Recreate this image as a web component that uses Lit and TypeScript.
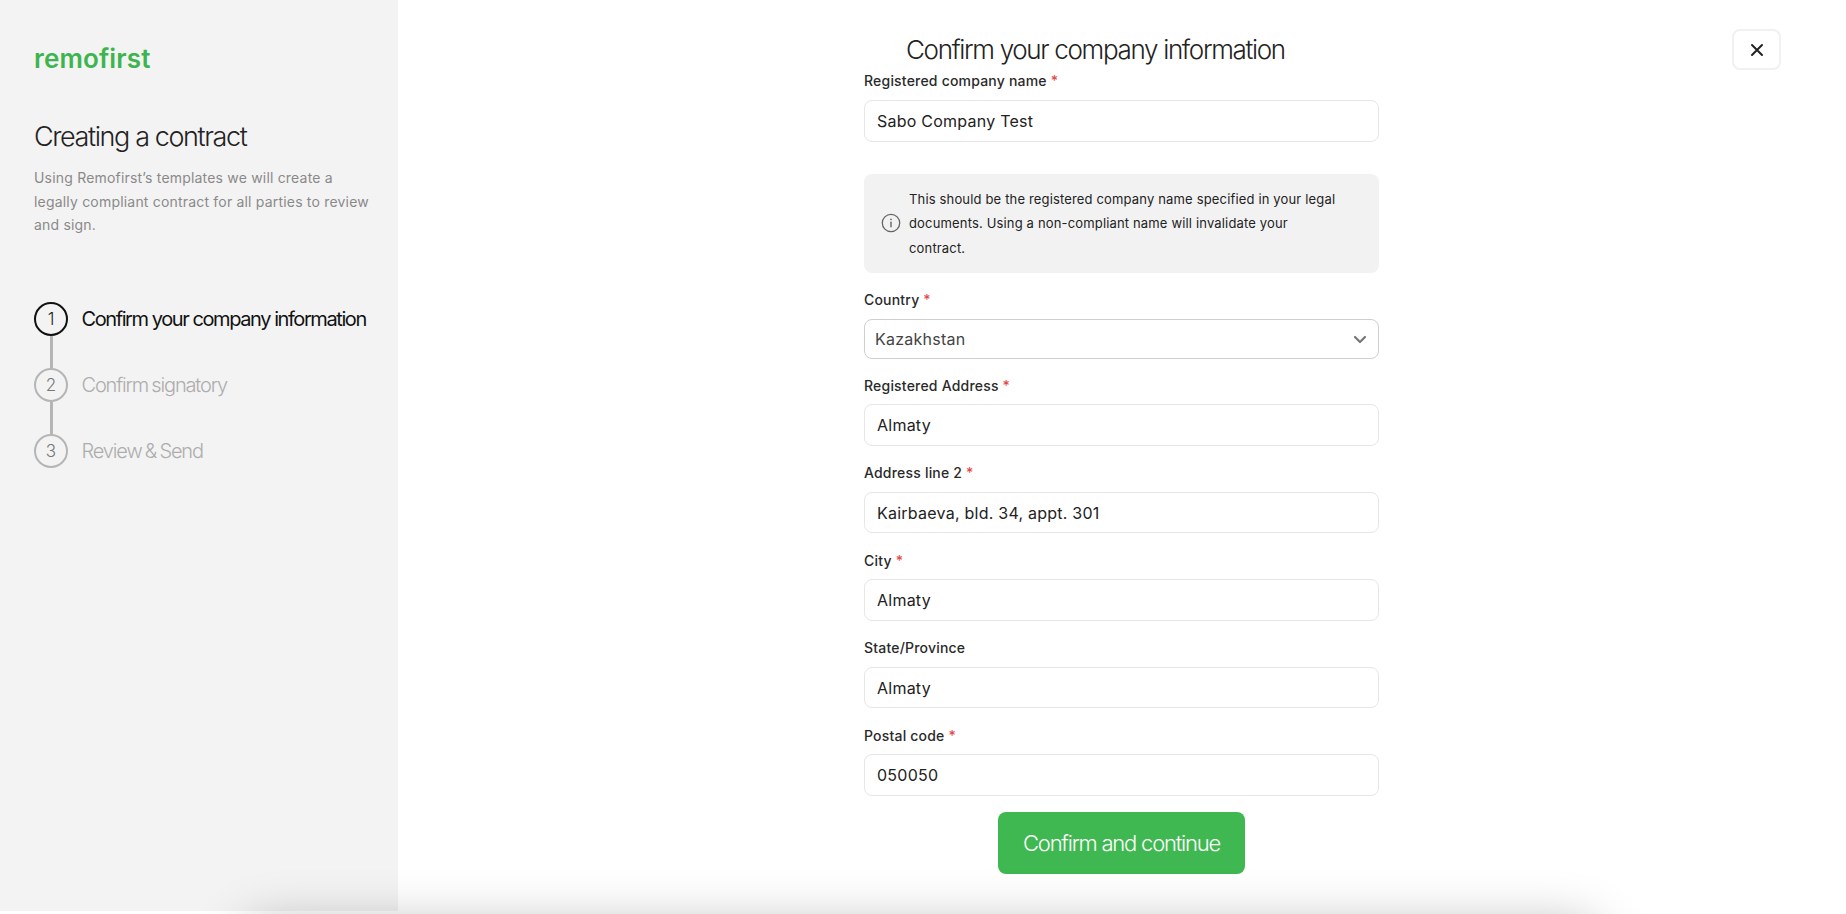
import { LitElement, html, css } from "lit";
import { customElement } from "lit/decorators.js";

const FIELDS: { label: string; value: string; req: boolean; select?: boolean }[] = [
  { label: "Country", value: "Kazakhstan", req: true, select: true },
  { label: "Registered Address", value: "Almaty", req: true },
  { label: "Address line 2", value: "Kairbaeva, bld. 34, appt. 301", req: true },
  { label: "City", value: "Almaty", req: true },
  { label: "State/Province", value: "Almaty", req: false },
  { label: "Postal code", value: "050050", req: true },
];

const STEPS = ["Confirm your company information", "Confirm signatory", "Review & Send"];

@customElement("app-root")
export class AppRoot extends LitElement {
  static styles = css`
    :host {
      display: block;
      position: relative;
      height: 914px;
      overflow: hidden;
      background: #fff;
      font-family: Inter, "Liberation Sans", sans-serif;
      color: #222;
    }
    * { box-sizing: border-box; }
    .page { display: flex; height: 911px; }
    .side {
      width: 398px;
      flex: none;
      background: #f3f3f3;
      padding: 45px 20px 0 34px;
    }
    .logo {
      font-size: 26px;
      line-height: 28px;
      font-weight: 600;
      color: #3db54e;
      letter-spacing: 0.15px;
    }
    .side h2 {
      margin: 46px 0 0;
      font-size: 27px;
      line-height: 36px;
      font-weight: 300;
      letter-spacing: -1.4px;
      color: #222;
    }
    .side p {
      margin: 11px 0 0;
      font-size: 14px;
      line-height: 23.5px;
      letter-spacing: 0.19px;
      color: #8a8a8a;
    }
    .steps { margin-top: 65px; display: flex; flex-direction: column; }
    .step { display: flex; align-items: center; gap: 13.5px; height: 34px; position: relative; }
    .step + .step { margin-top: 32px; }
    .step + .step::before {
      content: "";
      position: absolute;
      left: 15.5px;
      top: -32px;
      width: 3px;
      height: 32px;
      background: #b5b5b5;
    }
    .num {
      width: 34px;
      height: 34px;
      flex: none;
      border: 2px solid #b5b5b5;
      border-radius: 50%;
      display: flex;
      align-items: center;
      justify-content: center;
      font-size: 17px;
      font-weight: 300;
      color: #777;
    }
    .name {
      font-size: 20px;
      font-weight: 300;
      letter-spacing: -1.15px;
      word-spacing: -1.2px;
      color: #adadad;
      white-space: nowrap;
    }
    .step.on .num { border-color: #111; color: #222; }
    .step.on .name { color: #111; font-weight: 400; letter-spacing: -1.42px; word-spacing: 0; }
    .main { flex: 1; display: flex; justify-content: center; position: relative; }
    .form { width: 515px; padding-top: 32px; margin-right: 1px; }
    h1 {
      margin: 0 0 0 42px;
      font-size: 26px;
      line-height: 36px;
      font-weight: 300;
      letter-spacing: -1.33px;
      color: #222;
      white-space: nowrap;
    }
    label {
      display: block;
      font-size: 14px;
      line-height: 20px;
      font-weight: 500;
      letter-spacing: 0.2px;
      color: #2a2a2a;
    }
    label b { color: #e5484d; font-weight: 500; }
    .first { margin-top: 3px; }
    .first + .input { margin-top: 9px; }
    .input {
      margin-top: 8.5px;
      height: 41.5px;
      border: 1px solid #e6e6e6;
      border-radius: 8px;
      padding: 0 12px;
      display: flex;
      align-items: center;
      font-size: 16px;
      letter-spacing: 0.24px;
      color: #222;
    }
    .select {
      margin-top: 9.5px;
      margin-bottom: -1px;
      height: 40px;
      border-color: #cfcfcf;
      padding: 0 10px;
      color: #444;
      justify-content: space-between;
    }
    .select svg { width: 14px; height: 9px; margin-right: 1px; }
    .info {
      margin: 32.5px 0 17px;
      background: #f2f2f2;
      border-radius: 8px;
      padding: 12.5px 39px 12.5px 17px;
      display: flex;
      align-items: center;
      gap: 8px;
      font-size: 13px;
      line-height: 24.6px;
      letter-spacing: 0.16px;
      color: #222;
    }
    .info svg { width: 20px; height: 20px; flex: none; }
    .field { margin-bottom: 17.5px; }
    .btn {
      display: block;
      margin: -1.5px auto 0;
      width: 247px;
      height: 62px;
      border: 0;
      border-radius: 8px;
      background: #40b851;
      color: #fff;
      font-family: inherit;
      font-size: 22px;
      font-weight: 300;
      letter-spacing: -1.22px;
    }
    .close {
      position: absolute;
      top: 29px;
      right: 65px;
      width: 49px;
      height: 41px;
      background: #fff;
      border: 2px solid #f1f1f1;
      border-radius: 8px;
      display: flex;
      align-items: center;
      justify-content: center;
      padding: 0;
    }
    .close svg { width: 14px; height: 14px; }
    .shade {
      position: absolute;
      left: 250px;
      width: 1340px;
      top: 934px;
      height: 40px;
      border-radius: 30px;
      box-shadow: 0 0 50px 12px rgba(0, 0, 0, 0.25);
      pointer-events: none;
    }
  `;

  private field(f: { label: string; value: string; req: boolean; select?: boolean }) {
    return html`<div class="field">
      <label>${f.label}${f.req ? html` <b>*</b>` : ""}</label>
      ${f.select
        ? html`<div class="input select">
            ${f.value}
            <svg viewBox="0 0 14 9" fill="none" stroke="#777" stroke-width="2.2" stroke-linecap="round" stroke-linejoin="round"><path d="M2 2l5 5 5-5" /></svg>
          </div>`
        : html`<div class="input">${f.value}</div>`}
    </div>`;
  }

  render() {
    return html`
      <div class="page">
        <aside class="side">
          <div class="logo">remofirst</div>
          <h2>Creating a contract</h2>
          <p>Using Remofirst’s templates we will create a legally compliant contract for all parties to review and sign.</p>
          <div class="steps">
            ${STEPS.map(
              (s, i) => html`<div class="step ${i === 0 ? "on" : ""}">
                <span class="num">${i + 1}</span><span class="name">${s}</span>
              </div>`
            )}
          </div>
        </aside>
        <main class="main">
          <div class="form">
            <h1>Confirm your company information</h1>
            <label class="first">Registered company name <b>*</b></label>
            <div class="input">Sabo Company Test</div>
            <div class="info">
              <svg viewBox="0 0 20 20" fill="none" stroke="#666" stroke-width="1.3" stroke-linecap="round">
                <circle cx="10" cy="10" r="8.7" />
                <path d="M10 9.2v4.6" stroke-width="1.4" />
                <path d="M10 6.4v.1" stroke-width="1.7" />
              </svg>
              <span>This should be the registered company name specified in your legal documents. Using a non-compliant name will invalidate your contract.</span>
            </div>
            ${FIELDS.map((f) => this.field(f))}
            <button class="btn">Confirm and continue</button>
          </div>
          <button class="close" aria-label="Close">
            <svg viewBox="0 0 14 14" fill="none" stroke="#222" stroke-width="2" stroke-linecap="round"><path d="M2 2l10 10M12 2L2 12" /></svg>
          </button>
        </main>
      </div>
      <div class="shade"></div>
    `;
  }
}
